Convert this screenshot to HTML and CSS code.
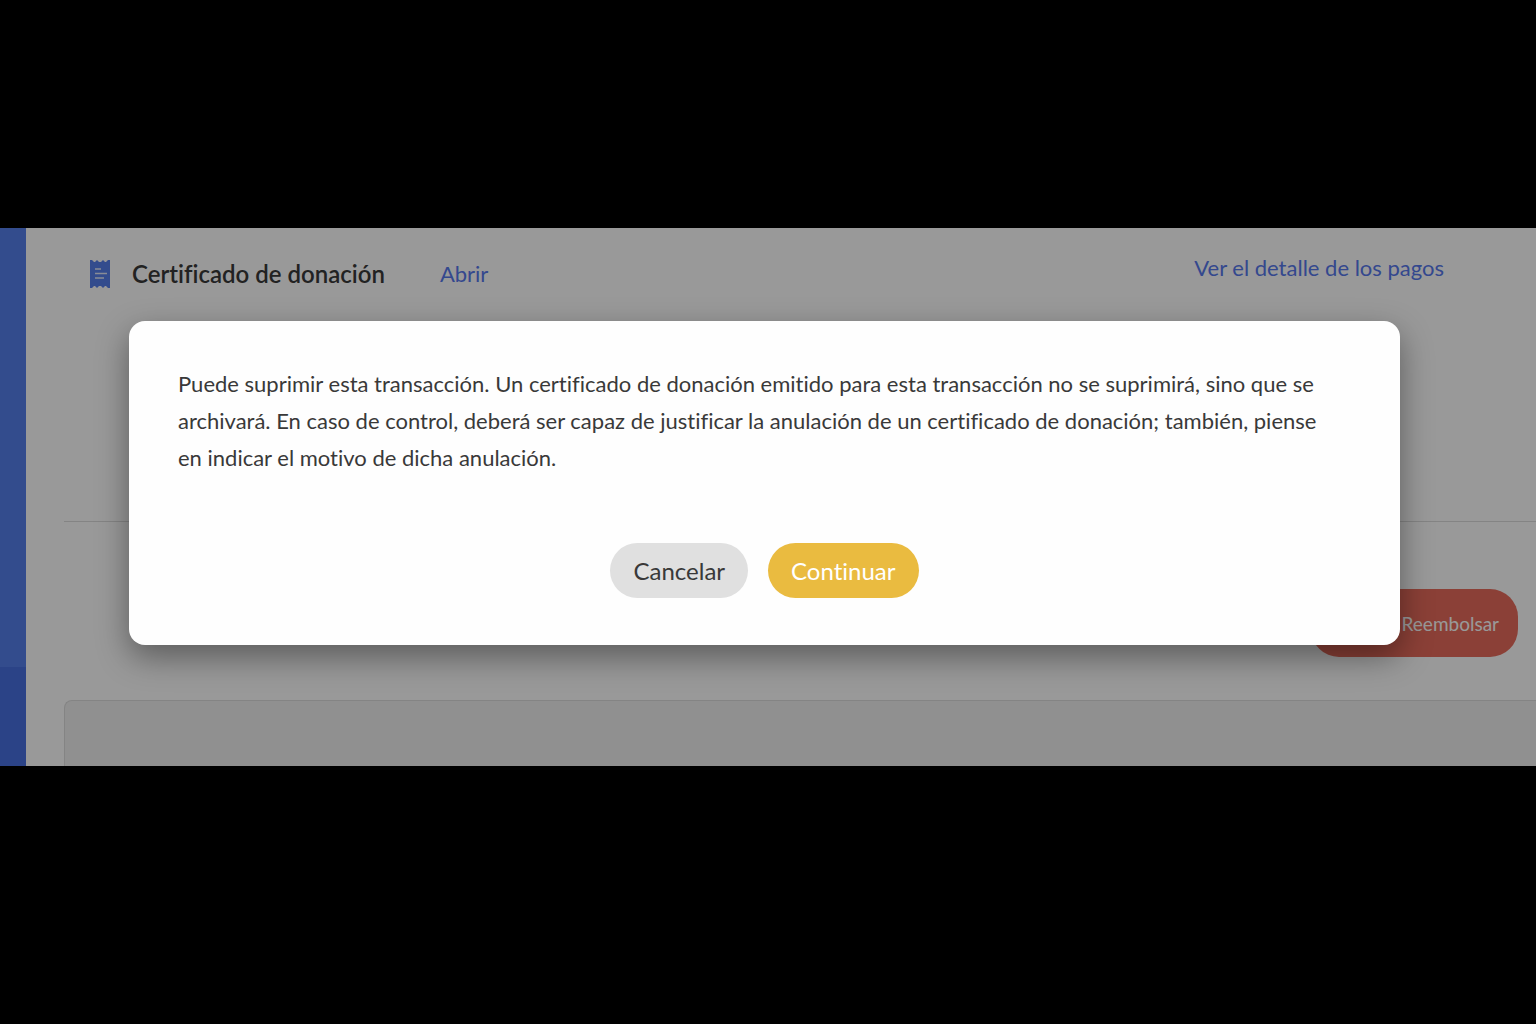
FILE: index.html
```
<!DOCTYPE html>
<html lang="es">

  <head>
    <meta charset="utf-8">
    <title>Certificado de donación</title>
    <link rel="stylesheet" href="styles.css">
  </head>

  <body>
    <div class="screen">
      <div class="sidebar">
        <div class="sidebar-bottom"></div>
      </div>
      <main class="content">
        <div class="top">
          <svg class="receipt" width="20" height="30" viewBox="0 0 20 30" aria-hidden="true">
            <path fill="#557feb" d="M0 1 L2 1 L4 3 L5 3 L7 1 L9 3 L11 3 L13 1 L15 3 L16 3 L18 1 L20 1 V29 L18 29 L16 27 L15 27 L13 29 L11 27 L9 27 L7 29 L5 27 L4 27 L2 29 L0 29 Z"/>
            <path stroke="#e4eafa" stroke-width="1.3" d="M5 10 H11 M5 14.5 H17 M5 19 H14"/>
          </svg>
          <h1>Certificado de donación</h1>
          <a class="open" href="#">Abrir</a>
          <a class="payments" href="#">Ver el detalle de los pagos</a>
        </div>
        <div class="actions">
          <button type="button" class="refund">Reembolsar</button>
        </div>
        <div class="panel"></div>
      </main>

      <div class="overlay">
        <div class="modal" role="dialog" aria-modal="true" aria-describedby="message">
          <p id="message">Puede suprimir esta transacción. Un certificado de donación emitido para esta transacción no se suprimirá, sino que se archivará. En caso de control, deberá ser capaz de justificar la anulación de un certificado de donación; también, piense en indicar el motivo de dicha anulación.</p>
          <div class="buttons">
            <button type="button" class="cancel">Cancelar</button>
            <button type="button" class="continue">Continuar</button>
          </div>
        </div>
      </div>
    </div>
  </body>

</html>
```

FILE: styles.css
```
* { box-sizing: border-box; }
body {
  margin: 0;
  padding-top: 228px;
  background-color: #000;
  font: 22px/37px Lato, "Noto Sans", sans-serif;
  font-variant-ligatures: none;
  color: #393939;
}
button {
  border: 0;
  border-radius: 28px;
  font: inherit;
  font-variant-ligatures: none;
  cursor: pointer;
}
a {
  color: #5778ed;
  text-decoration: none;
}
.screen {
  position: relative;
  display: flex;
  overflow: hidden;
}
.sidebar {
  display: flex;
  flex: none;
  flex-direction: column;
  justify-content: flex-end;
  width: 26px;
  background: #557feb;
}
.sidebar-bottom {
  height: 99px;
  background: #4871e1;
}
.content {
  flex: 1;
  padding-left: 38px;
  background: #fff;
}
.top {
  display: flex;
  align-items: flex-start;
  height: 294px;
  padding: 21px 92px 0 26px;
  border-bottom: 1px solid #dcdcdc;
}
.receipt {
  margin: 10px 22px 0 0;
}
h1 {
  margin: 6px 55px 0 0;
  font-size: 24px;
  font-weight: 600;
  line-height: 37px;
}
.open {
  margin-top: 6px;
}
.payments {
  margin-left: auto;
}
.actions {
  display: flex;
  justify-content: flex-end;
  padding: 67px 18px 43px 0;
}
.refund {
  width: 207px;
  height: 68px;
  padding: 0 19px;
  background: #e86b5c;
  color: #fff;
  font-size: 19px;
  text-align: right;
}
.panel {
  height: 66px;
  border: 1px solid #dcdcdc;
  border-width: 1px 0 0 1px;
  border-radius: 8px 0 0 0;
  background: #f0f0f0;
}
/* dialog over the page */
.overlay {
  position: absolute;
  inset: 0;
  padding: 93px 136px 0 129px;
  background: rgba(0, 0, 0, 0.4);
}
.modal {
  padding: 44px 49px 47px;
  border-radius: 16px;
  background: #fefefe;
  box-shadow: 0 12px 32px rgba(0, 0, 0, 0.4);
}
.modal p {
  margin: 0 0 67px;
  padding-right: 16px;
}
.buttons {
  display: flex;
  justify-content: center;
  gap: 20px;
}
.buttons button {
  height: 55px;
  padding: 0 23px;
  font-size: 24px;
}
.cancel {
  background: #e0e0e0;
  color: #393939;
}
.continue {
  background: #eabb40;
  color: #fff;
}
```
